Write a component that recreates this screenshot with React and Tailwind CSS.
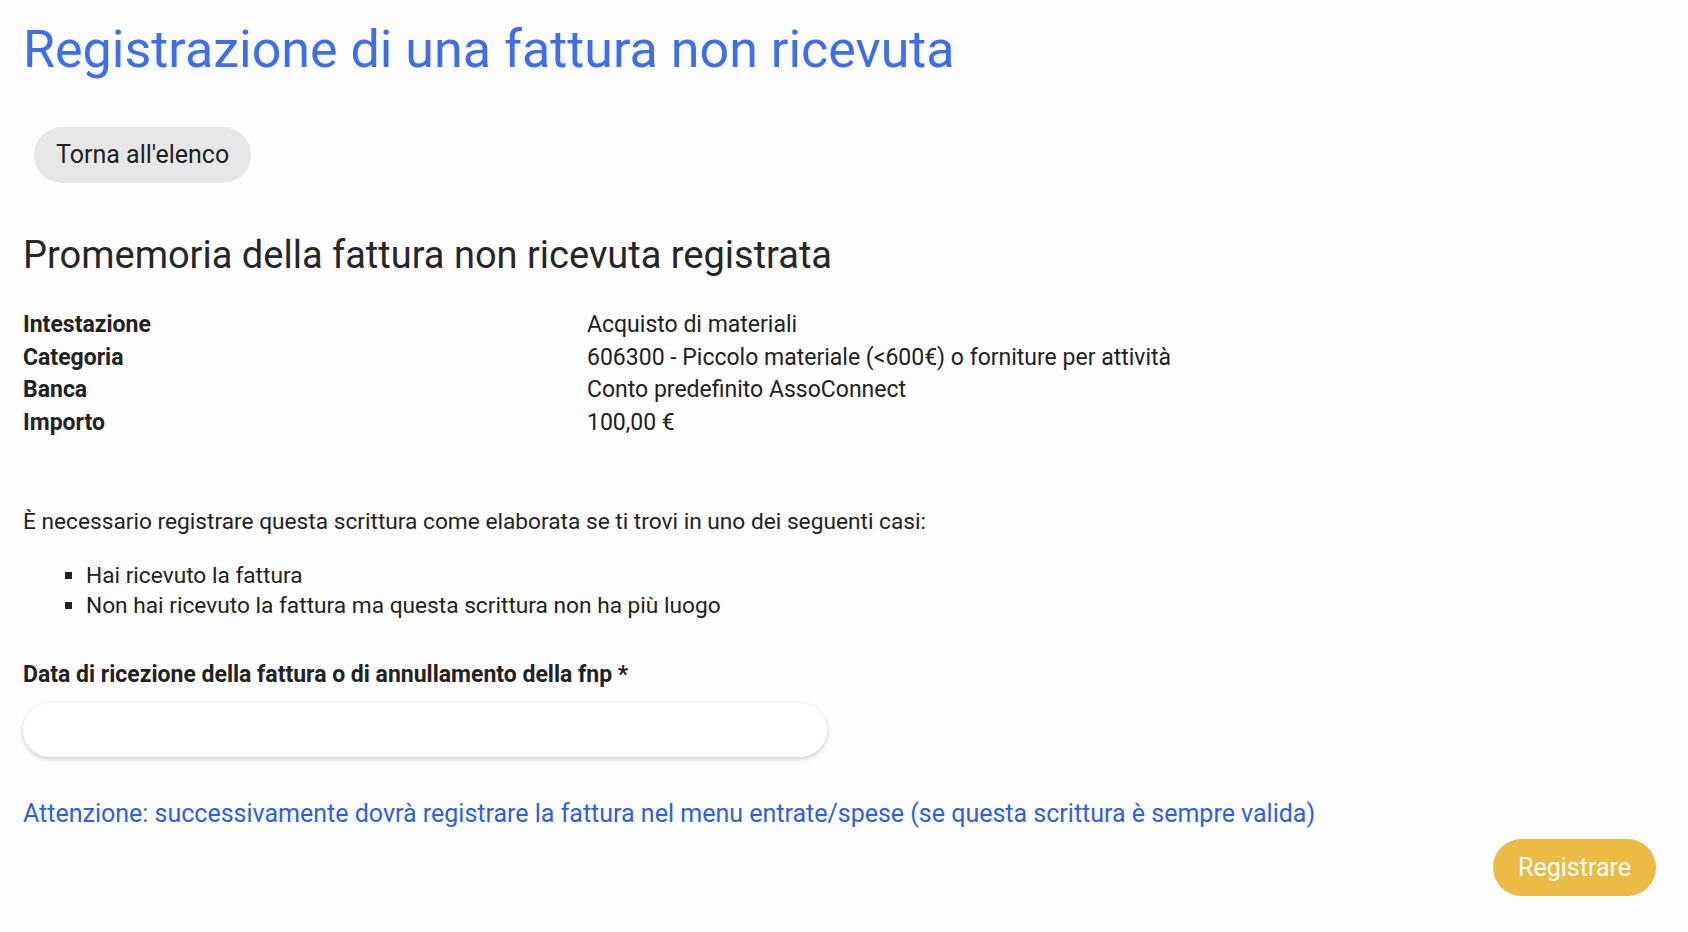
import React, { useState } from "react";

const details = [
  { label: "Intestazione", value: "Acquisto di materiali" },
  { label: "Categoria", value: "606300 - Piccolo materiale (<600€) o forniture per attività" },
  { label: "Banca", value: "Conto predefinito AssoConnect" },
  { label: "Importo", value: "100,00 €" },
];

const App = () => {
  const [date, setDate] = useState("");

  return (
    <div className="min-h-screen bg-[#fdfdfd] pl-[23px] pr-6 pt-5 pb-8 text-[#222] font-['Roboto','Liberation_Sans',sans-serif]">
      <h1 className="text-[52px] leading-[60px] text-[#3d6ef2]">
        Registrazione di una fattura non ricevuta
      </h1>

      <div className="mt-[47px] pl-[11px]">
        <button
          type="button"
          className="h-[56px] rounded-full bg-[#e7e7e7] px-[22px] text-[25px] text-[#222]"
        >
          Torna all'elenco
        </button>
      </div>

      <h2 className="mt-[50px] text-[38px] leading-[44px] text-[#262626]">
        Promemoria della fattura non ricevuta registrata
      </h2>

      <div className="mt-[32px] grid grid-cols-[564px_1fr] text-[23px] leading-[32.5px]">
        {details.map((d) => (
          <React.Fragment key={d.label}>
            <div className="font-bold">{d.label}</div>
            <div>{d.value}</div>
          </React.Fragment>
        ))}
      </div>

      <p className="mt-[67px] text-[22.7px] leading-[32px]">
        È necessario registrare questa scrittura come elaborata se ti trovi in uno dei seguenti casi:
      </p>
      <ul className="mt-[23px] pl-[63px] text-[22.7px] leading-[30px] list-[square]">
        <li>Hai ricevuto la fattura</li>
        <li>Non hai ricevuto la fattura ma questa scrittura non ha più luogo</li>
      </ul>

      <label className="mt-[38px] block text-[23px] leading-[32px] font-bold">
        Data di ricezione della fattura o di annullamento della fnp *
      </label>
      <input
        type="text"
        value={date}
        onChange={(e) => setDate(e.target.value)}
        className="mt-[12px] block h-[54px] w-[804px] rounded-full bg-white px-6 text-[21px] shadow-[0_2px_5px_rgba(0,0,0,0.18)] outline-none"
      />

      <p className="mt-[40px] text-[25px] leading-[34px] text-[#2d5fe8]">
        Attenzione: successivamente dovrà registrare la fattura nel menu entrate/spese (se questa scrittura è sempre valida)
      </p>

      <div className="mt-[8px] flex justify-end pr-[8px]">
        <button
          type="submit"
          className="h-[57px] rounded-full bg-[#ebbb45] px-[25px] text-[25px] text-white"
        >
          Registrare
        </button>
      </div>
    </div>
  );
};

export default App;
